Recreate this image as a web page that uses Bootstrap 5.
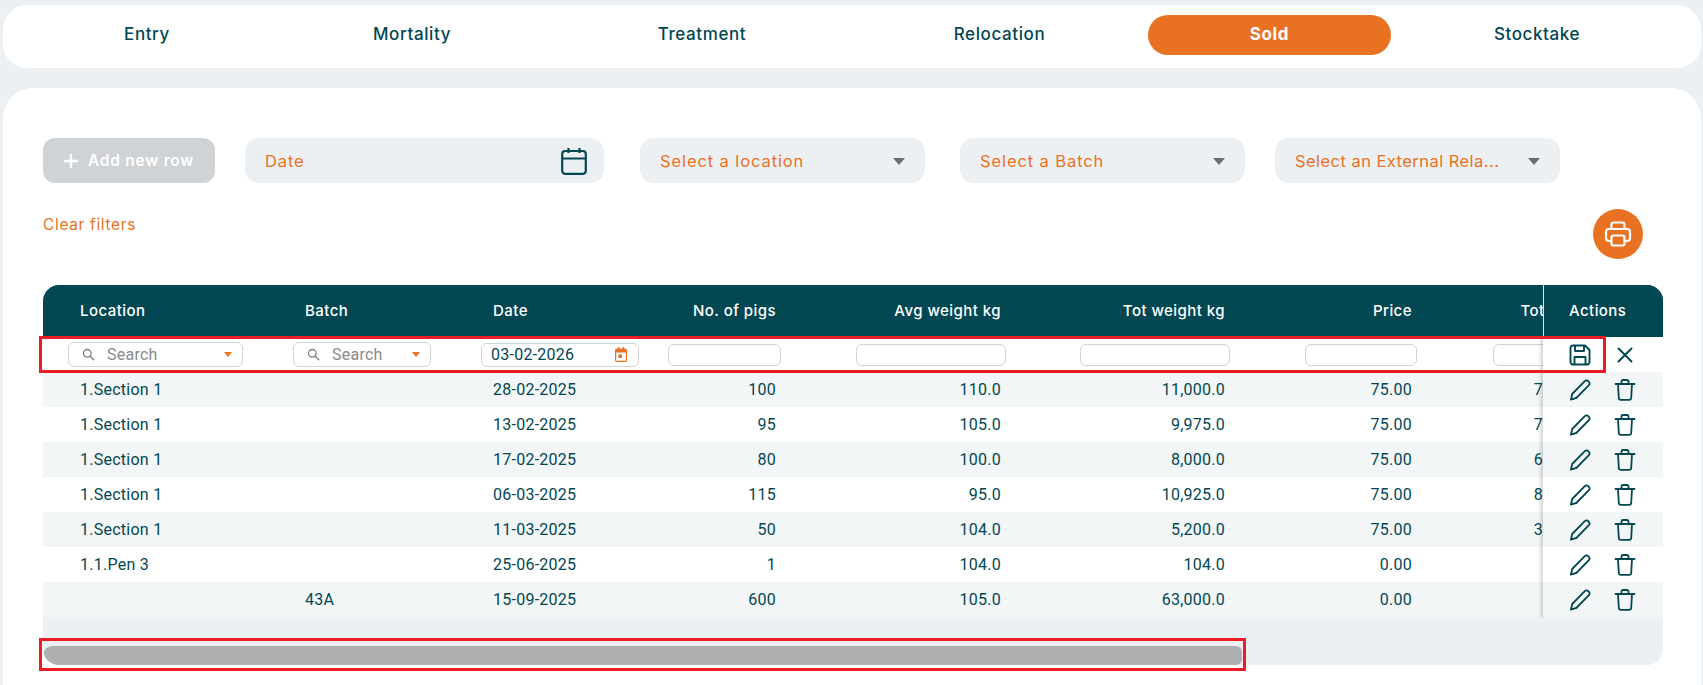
<!DOCTYPE html>
<html lang="en"><head><meta charset="utf-8"><title>Sold</title>
<link href="https://cdn.jsdelivr.net/npm/bootstrap@5.3.0/dist/css/bootstrap.min.css" rel="stylesheet">
<script src="https://cdn.jsdelivr.net/npm/bootstrap@5.3.0/dist/js/bootstrap.bundle.min.js"></script>
<style>
:root{--teal:#024752;--orange:#e97122;--pagebg:#edf0f3}
html,body{height:685px;overflow:hidden}
body{background:var(--pagebg);font-family:Roboto,sans-serif;padding:5px 2px 0 3px;color:var(--teal)}
.topnav{height:63px;border-radius:24px;padding:10px 21px 0 20px}
.topnav .nav{width:100%;flex-wrap:nowrap}
.topnav .nav-item{flex:0 0 auto}
.n1{width:248px}.n2{width:282px}.n3{width:298px}.n4{width:297px}.n5{width:243px}.n6{width:292px}
.topnav .nav-link{height:40px;padding:0;line-height:38px;border-radius:20px;color:var(--teal);font-family:Inter,sans-serif;font-weight:500;font-size:17px;letter-spacing:.6px}
.topnav .nav-link.active{background:var(--orange);color:#fff;font-weight:700}
.maincard{margin-top:20px;height:640px;border-radius:30px;padding:50px 38px 0 40px}
.fbar{height:45px}
.addbtn{width:172px;height:45px;border:0;border-radius:12px;background:#d0d3d6;color:#fff;font:600 15.500px Inter,sans-serif;letter-spacing:.75px;gap:10px}
.ffield{height:45px;border-radius:14px;background:var(--pagebg);color:var(--orange);font:400 16.500px Inter,sans-serif;letter-spacing:.9px;padding:1px 20px 0}
.f-date{width:359px;margin-left:30px;padding-right:17px}
.f-loc{width:285px;margin-left:36px}
.f-bat{width:285px;margin-left:35px}
.f-ext{width:285px;margin-left:30px;letter-spacing:.45px}
.tri{width:0;height:0;border-left:6px solid transparent;border-right:6px solid transparent;border-top:7px solid #6c6c6c;flex:none}
.clearrow{margin-top:26px;height:50px}
.clearlnk{color:var(--orange);font:400 15.500px Inter,sans-serif;letter-spacing:.65px;text-decoration:none;padding-top:6px}
.printbtn{width:50px;height:50px;margin-right:20px;background:var(--orange)}
.tblwrap{margin-top:26px;position:relative}
.tshell{height:380px;border-radius:16px;overflow:hidden;background:var(--pagebg)}
.tview{overflow:hidden;height:332px}
.gridt{width:2189px;table-layout:fixed;border-collapse:separate;border-spacing:0;font-size:16px;letter-spacing:.25px;margin:0}
.gridt th{height:52px;background:var(--teal);color:#fff;font:500 15px Inter,sans-serif;letter-spacing:.45px;vertical-align:middle;padding:0 30px 2px 37px;white-space:nowrap}
.gridt th.num{padding-left:0}
.gridt th.totcol{padding-right:26px}
.gridt td{height:35px;padding:0 30px 0 37px;background:#fff;color:var(--teal);vertical-align:middle;white-space:nowrap}
.gridt td.num{padding-left:0}
.gridt tbody tr.stripe td{background:#f3f6f7}
.gridt .filt td{padding:0 25px}
.gridt .filt td.nopad{padding-left:0}
.gridt .num{text-align:right}
.gridt th.stick,.gridt td.stick,.gridt .filt td.stick{position:sticky;right:0;padding:0}
.gridt th.stick{background:var(--teal);border-left:1px solid #dfe5e7;padding:0 0 2px 25px}
.gridt td.stick::before{content:"";position:absolute;left:-5px;top:0;bottom:0;width:5px;background:linear-gradient(to left,rgba(0,0,0,.16),rgba(0,0,0,0))}
.acts{display:flex;padding-left:25px;gap:21px;align-items:center}
.acts svg{width:24px;height:24px;display:block;flex:none}
.pick{height:25px;border:1px solid #cfd2d6;border-radius:6px;display:flex;align-items:center;background:#fff;color:#8a8a8a;font-size:16px;padding:0 10px 0 13px}
.pick .ph{margin-left:12px;flex:1}
.caret{width:0;height:0;border-left:4.500px solid transparent;border-right:4.500px solid transparent;border-top:5px solid var(--orange)}
.datepick{height:24px;color:var(--teal);padding:0 11px 0 9px}
.numin{display:block;height:22px;border:1px solid #cfd2d6;border-radius:6px;margin-left:auto;padding:0;background:#fff}
.w-pig{width:113px}.w-avg{width:150px}.w-tot{width:150px}.w-pri{width:112px}.w-all{width:109px}
.sbtrack{height:19px;margin-top:29px}
.sbthumb{width:1199px;height:19px;background:#aeb0b2;border-radius:10px 6px 6px 10px}
.redbox{position:absolute;border:3px solid #ed1c24;pointer-events:none}
.rb1{left:-4px;top:51px;width:1567px;height:37px}
.rb2{left:-4px;top:353px;width:1207px;height:33px}
</style></head>
<body>
<div class="bg-white topnav">
 <ul class="nav nav-pills nav-fill">
  <li class="nav-item n1"><a class="nav-link" href="#">Entry</a></li>
  <li class="nav-item n2"><a class="nav-link" href="#">Mortality</a></li>
  <li class="nav-item n3"><a class="nav-link" href="#">Treatment</a></li>
  <li class="nav-item n4"><a class="nav-link" href="#">Relocation</a></li>
  <li class="nav-item n5"><a class="nav-link active" href="#">Sold</a></li>
  <li class="nav-item n6"><a class="nav-link" href="#">Stocktake</a></li>
 </ul>
</div>
<div class="bg-white maincard">
 <div class="d-flex fbar">
  <button class="addbtn d-flex align-items-center justify-content-center" type="button"><svg width="14" height="14" viewBox="0 0 14 14"><path d="M7 1v12M1 7h12" stroke="#fff" stroke-width="2.4" stroke-linecap="round"/></svg>Add new row</button>
  <div class="ffield f-date d-flex align-items-center justify-content-between"><span>Date</span>
   <svg width="26" height="28" viewBox="0 0 26 28" fill="none" stroke="#024752" stroke-width="2.2" stroke-linejoin="round"><rect x="1.2" y="4" width="23.6" height="22.8" rx="3"/><path d="M1.2 11.5h23.6M7.5 1v5M18.5 1v5"/></svg></div>
  <div class="ffield f-loc d-flex align-items-center justify-content-between"><span>Select a location</span><i class="tri"></i></div>
  <div class="ffield f-bat d-flex align-items-center justify-content-between"><span>Select a Batch</span><i class="tri"></i></div>
  <div class="ffield f-ext d-flex align-items-center justify-content-between"><span class="text-truncate">Select an External Rela...</span><i class="tri ms-2"></i></div>
 </div>
 <div class="d-flex justify-content-between clearrow">
  <a class="clearlnk" href="#">Clear filters</a>
  <button class="printbtn btn rounded-circle p-0 d-flex align-items-center justify-content-center" type="button" aria-label="Print"><svg width="28" height="28" viewBox="0 0 28 28" fill="none" stroke="#fff" stroke-width="2.2" stroke-linejoin="round"><path d="M7.5 9V4.5a2 2 0 0 1 2-2h9a2 2 0 0 1 2 2V9"/><path d="M7.5 21H5a3 3 0 0 1-3-3v-6a3 3 0 0 1 3-3h18a3 3 0 0 1 3 3v6a3 3 0 0 1-3 3h-2.500"/><rect x="7.500" y="15.500" width="13" height="10" rx="2"/></svg></button>
 </div>
 <div class="tblwrap">
  <div class="tshell">
   <div class="tview">
    <table class="gridt">
     <colgroup><col style="width:225px"><col style="width:188px"><col style="width:208px"><col style="width:142px"><col style="width:225px"><col style="width:224px"><col style="width:187px"><col style="width:185px"><col style="width:240px"><col style="width:245px"><col style="width:120px"></colgroup>
     <thead><tr><th>Location</th><th>Batch</th><th>Date</th><th class="num">No. of pigs</th><th class="num">Avg weight kg</th><th class="num">Tot weight kg</th><th class="num">Price</th><th class="num totcol">Total price</th><th>External relation</th><th>Notes</th><th class="stick">Actions</th></tr></thead>
     <tbody id="tb"></tbody>
    </table>
   </div>
   <div class="sbtrack"><div class="sbthumb"></div></div>
  </div>
  <div class="redbox rb1"></div>
  <div class="redbox rb2"></div>
 </div>
</div>
<script>
var rows=[["1.Section 1","","28-02-2025","100","110.0","11,000.0","75.00","7,500.00"],["1.Section 1","","13-02-2025","95","105.0","9,975.0","75.00","7,125.00"],["1.Section 1","","17-02-2025","80","100.0","8,000.0","75.00","6,000.00"],["1.Section 1","","06-03-2025","115","95.0","10,925.0","75.00","8,625.00"],["1.Section 1","","11-03-2025","50","104.0","5,200.0","75.00","3,750.00"],["1.1.Pen 3","","25-06-2025","1","104.0","104.0","0.00","0.00"],["","43A","15-09-2025","600","105.0","63,000.0","0.00","0.00"]];
var pen='<svg viewBox="0 0 24 24" fill="none" stroke="#024752" stroke-width="1.8" stroke-linejoin="round" stroke-linecap="round"><path d="M3 21.500l1.200-5.500L16.800 3.200a2.400 2.400 0 0 1 3.500 0l.6.6a2.400 2.400 0 0 1 0 3.400L8.300 20z"/><path d="M3 21.500l5.300-1.500"/></svg>';
var bin='<svg viewBox="0 0 24 24" fill="none" stroke="#024752" stroke-width="1.8" stroke-linejoin="round" stroke-linecap="round"><path d="M2.500 6h19M5 6l.8 14a2 2 0 0 0 2 1.800h8.400a2 2 0 0 0 2-1.800L19 6M8.500 6V3.500a1.500 1.500 0 0 1 1.500-1.500h4a1.500 1.500 0 0 1 1.500 1.500V6"/></svg>';
var save='<svg viewBox="0 0 24 24" fill="none" stroke="#024752" stroke-width="1.9" stroke-linejoin="round"><path d="M5 2.500h12l4.500 4.500v12a2.500 2.500 0 0 1-2.500 2.500H5A2.500 2.500 0 0 1 2.500 19V5A2.500 2.500 0 0 1 5 2.500z"/><path d="M7 2.500v5.500h9V2.500M6.500 21.500V14h11v7.500"/></svg>';
var xic='<svg viewBox="0 0 24 24" fill="none" stroke="#024752" stroke-width="1.9" stroke-linecap="round"><path d="M5.500 5.500l13 13M18.500 5.500l-13 13"/></svg>';
var srch='<svg width="13" height="13" viewBox="0 0 13 13" fill="none" stroke="#7c7c7c" stroke-width="1.300"><circle cx="5.300" cy="5.300" r="3.800"/><path d="M8.200 8.200l4 4"/></svg>';
var cal='<svg width="12" height="15" viewBox="0 0 12 15"><path fill="#e97122" d="M2 1.500h1V0h1.300v1.500h3.400V0H9v1.500h1a2 2 0 0 1 2 2v9.500a2 2 0 0 1-2 2H2a2 2 0 0 1-2-2V3.500a2 2 0 0 1 2-2zM1.200 5.500V13a.8.8 0 0 0 .8.8h8a.8.8 0 0 0 .8-.8V5.500z"/><rect fill="#e97122" x="3.500" y="7.500" width="3.500" height="3.500"/></svg>';
var h='<tr class="filt"><td><div class="pick">'+srch+'<span class="ph">Search</span><i class="caret"></i></div></td><td><div class="pick">'+srch+'<span class="ph">Search</span><i class="caret"></i></div></td><td><div class="pick datepick justify-content-between"><span>03-02-2026</span>'+cal+'</div></td><td class="nopad"><input class="numin w-pig" aria-label="No. of pigs"></td><td class="nopad"><input class="numin w-avg" aria-label="Avg weight"></td><td class="nopad"><input class="numin w-tot" aria-label="Tot weight"></td><td class="nopad"><input class="numin w-pri" aria-label="Price"></td><td class="nopad"><input class="numin w-all" aria-label="Total"></td><td></td><td></td><td class="stick"><div class="acts">'+save+xic+'</div></td></tr>';
rows.forEach(function(r,i){h+='<tr'+(i%2==0?' class="stripe"':'')+'>';r.forEach(function(c,j){h+='<td'+(j>2?' class="num"':'')+'>'+c+'</td>'});h+='<td></td><td></td><td class="stick"><div class="acts">'+pen+bin+'</div></td></tr>'});
document.getElementById('tb').innerHTML=h;
</script>
</body></html>
